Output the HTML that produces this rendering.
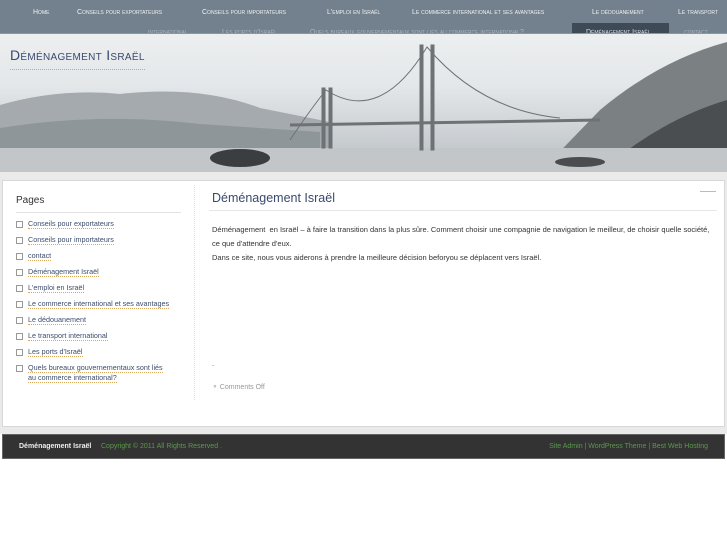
<!DOCTYPE html>
<html><head><meta charset="utf-8"><style>
*{margin:0;padding:0;box-sizing:border-box}
body{width:727px;height:545px;background:#fff;font-family:"Liberation Sans",sans-serif;position:relative;overflow:hidden}
#hdr{position:absolute;left:0;top:0;width:727px;height:172px;background:linear-gradient(#f2f4f5 0%,#e4e7e9 50%,#cfd3d6 75%,#babfc2 100%);overflow:hidden}
#nav{position:absolute;left:0;top:0;width:727px;height:34px;background:rgba(110,125,138,0.97);overflow:hidden;border-bottom:1px solid #8a96a0}
#nav span{position:absolute;color:#f0f0f0;font-size:7px;font-variant:small-caps;white-space:nowrap}
#nav .r2{color:#aab4bd;top:29px}
#sel{position:absolute;left:572px;top:23px;width:97px;height:20px;background:#3e4a56}
#title{position:absolute;left:10px;top:47px;font-size:14px;color:#3a4a6e;font-variant:small-caps;letter-spacing:0.3px;border-bottom:1px dotted #c9a86a;padding-bottom:6px}
#box{position:absolute;left:2px;top:180px;width:723px;height:247px;background:#fff;border:1px solid #d8d8d8}
#wrap{position:absolute;left:0;top:172px;width:727px;height:262px;background:#eaeaea}
#side{position:absolute;left:16px;top:195px;width:165px}
#side h3{font-size:10px;font-weight:normal;color:#333;padding-bottom:6px;border-bottom:1px solid #e3e3e3;margin-bottom:2px}
#side li{list-style:none;font-size:7.2px;color:#3c4d6e;margin:6px 0 0 0;padding-left:12px;position:relative;line-height:10px;padding-right:4px}
#side li:before{content:"";position:absolute;left:0;top:2px;width:5px;height:5px;border:1px solid #999}
#side li span{border-bottom:1px dotted #d8a860}
#vline{position:absolute;left:194px;top:185px;height:215px;border-left:1px dotted #ddd}
#main{position:absolute;left:209px;top:191px;width:508px}
#main h2{font-size:12.5px;font-weight:normal;color:#3a4a6e;padding:0 3px 5px;border-bottom:1px solid #e6e6e6}
#main p{font-size:7.5px;color:#333;line-height:14px;padding-left:3px;margin-top:12px}
#footer{position:absolute;left:2px;top:434px;width:723px;height:25px;background:#333;border:1px solid #666;font-size:7px;line-height:23px;color:#5a9a4a}
</style></head><body>
<div id="hdr">
<svg width="727" height="172" style="position:absolute;left:0;top:0">
<path d="M0 105 Q60 88 120 94 Q200 85 260 108 L330 122 L330 172 L0 172Z" fill="#a4aaae"/>
<path d="M0 128 Q100 112 200 124 L320 132 L320 172 L0 172Z" fill="#8f969a"/>
<path d="M540 172 L600 110 Q660 60 727 42 L727 172Z" fill="#7b8083"/>
<path d="M600 172 Q660 120 727 100 L727 172Z" fill="#4a4e50"/>
<rect x="0" y="148" width="727" height="24" fill="#c2c6c8"/>
<g stroke="#6d7275" fill="none">
<rect x="420" y="45" width="3" height="105" fill="#6d7275"/>
<rect x="431" y="45" width="3" height="105" fill="#6d7275"/>
<rect x="322" y="88" width="3" height="60" fill="#6d7275"/>
<rect x="329" y="88" width="3" height="60" fill="#6d7275"/>
<path d="M290 140 Q310 110 326 90 Q380 125 427 47 Q480 110 560 118" stroke-width="1"/>
<path d="M290 125 L600 120" stroke-width="3"/>
</g>
<ellipse cx="240" cy="158" rx="30" ry="9" fill="#3b3e40"/>
<ellipse cx="580" cy="162" rx="25" ry="5" fill="#4a4d4f"/>
</svg>
<div id="title">Déménagement Israël</div>
</div>
<div id="nav">
<div id="sel"></div>
<span style="left:33px;top:9px">Home</span>
<span style="left:77px;top:9px">Conseils pour exportateurs</span>
<span style="left:202px;top:9px">Conseils pour importateurs</span>
<span style="left:327px;top:9px">L'emploi en Israël</span>
<span style="left:412px;top:9px">Le commerce international et ses avantages</span>
<span style="left:592px;top:9px">Le dédouanement</span>
<span style="left:678px;top:9px">Le transport</span>
<span class="r2" style="left:148px">international</span>
<span class="r2" style="left:222px">Les ports d'Israël</span>
<span class="r2" style="left:310px">Quels bureaux gouvernementaux sont liés au commerce international?</span>
<span class="r2" style="left:586px;color:#dde">Déménagement Israël</span>
<span class="r2" style="left:684px">contact</span>
</div>
<div id="wrap"></div>
<div id="box"><div style="position:absolute;right:8px;top:10px;width:16px;border-top:1px solid #bbb"></div></div>
<div id="side"><h3>Pages</h3><ul>
<li><span>Conseils pour exportateurs</span></li>
<li><span>Conseils pour importateurs</span></li>
<li><span>contact</span></li>
<li><span>Déménagement Israël</span></li>
<li><span>L'emploi en Israël</span></li>
<li style="white-space:nowrap"><span>Le commerce international et ses avantages</span></li>
<li><span>Le dédouanement</span></li>
<li><span>Le transport international</span></li>
<li><span>Les ports d'Israël</span></li>
<li><span>Quels bureaux gouvernementaux sont liés<br>au commerce international?</span></li>
</ul></div>
<div id="vline"></div>
<div id="main"><h2>Déménagement Israël</h2>
<p>Déménagement &nbsp;en Israël – à faire la transition dans la plus sûre. Comment choisir une compagnie de navigation le meilleur, de choisir quelle société, ce que d'attendre d'eux.<br>Dans ce site, nous vous aiderons à prendre la meilleure décision beforyou se déplacent vers Israël.</p>
<p style="margin-top:92px">.</p>
<p style="margin-top:10px;color:#999;font-size:7px">&#9900; Comments Off</p>
</div>
<div id="footer"><span style="position:absolute;left:16px;color:#eee;font-weight:bold">Déménagement Israël</span><span style="position:absolute;left:98px">Copyright © 2011 All Rights Reserved .</span><span style="position:absolute;right:16px">Site Admin | WordPress Theme | Best Web Hosting</span></div>
</body></html>
